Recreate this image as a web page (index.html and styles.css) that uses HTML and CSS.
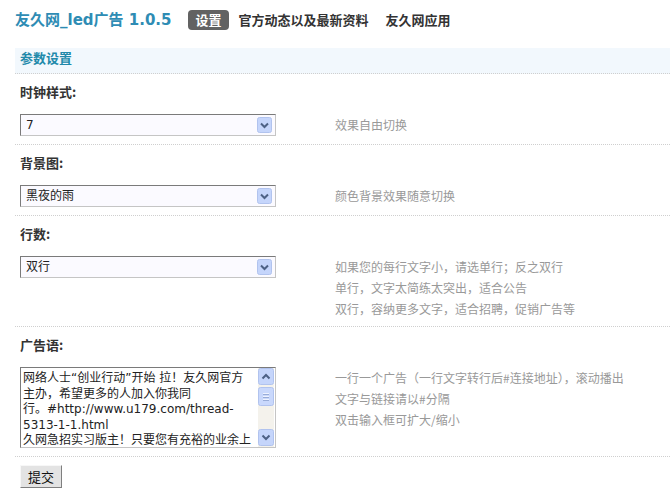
FILE: index.html
```html
<!DOCTYPE html>
<html lang="zh-CN">
<head>
    <meta charset="UTF-8">
    <title>友久网_led广告 - 设置</title>
    <link rel="stylesheet" href="styles.css">
</head>
<body>
    <div class="page">
        <!-- 顶部标题与导航 -->
        <div class="top">
            <h1 class="title">友久网_led广告 1.0.5</h1>
            <ul class="nav">
                <li class="current"><a href="#">设置</a></li>
                <li><a href="#">官方动态以及最新资料</a></li>
                <li><a href="#">友久网应用</a></li>
            </ul>
        </div>

        <form class="settings" onsubmit="return false;">
            <h2 class="bar">参数设置</h2>

            <!-- 时钟样式 -->
            <div class="section">
                <div class="label">时钟样式:</div>
                <div class="row">
                    <div class="select-box">
                        <select name="clock">
                            <option>7</option>
                        </select>
                        <svg class="drop" viewBox="0 0 15 16" width="15" height="16">
                            <rect x="0.5" y="0.5" width="14" height="15" rx="2" fill="#c5d5fb" stroke="#b1c3ee"/>
                            <path d="M4 6.5 L7.5 10 L11 6.5" fill="none" stroke="#4d6185" stroke-width="2"/>
                        </svg>
                    </div>
                    <div class="desc">效果自由切换</div>
                </div>
            </div>

            <!-- 背景图 -->
            <div class="section">
                <div class="label">背景图:</div>
                <div class="row">
                    <div class="select-box">
                        <select name="bg">
                            <option>黑夜的雨</option>
                        </select>
                        <svg class="drop" viewBox="0 0 15 16" width="15" height="16">
                            <rect x="0.5" y="0.5" width="14" height="15" rx="2" fill="#c5d5fb" stroke="#b1c3ee"/>
                            <path d="M4 6.5 L7.5 10 L11 6.5" fill="none" stroke="#4d6185" stroke-width="2"/>
                        </svg>
                    </div>
                    <div class="desc">颜色背景效果随意切换</div>
                </div>
            </div>

            <!-- 行数 -->
            <div class="section">
                <div class="label">行数:</div>
                <div class="row">
                    <div class="select-box">
                        <select name="lines">
                            <option>双行</option>
                        </select>
                        <svg class="drop" viewBox="0 0 15 16" width="15" height="16">
                            <rect x="0.5" y="0.5" width="14" height="15" rx="2" fill="#c5d5fb" stroke="#b1c3ee"/>
                            <path d="M4 6.5 L7.5 10 L11 6.5" fill="none" stroke="#4d6185" stroke-width="2"/>
                        </svg>
                    </div>
                    <div class="desc">
                        如果您的每行文字小，请选单行；反之双行<br>
                        单行，文字太简练太突出，适合公告<br>
                        双行，容纳更多文字，适合招聘，促销广告等
                    </div>
                </div>
            </div>

            <!-- 广告语 -->
            <div class="section">
                <div class="label">广告语:</div>
                <div class="row">
                    <div class="text-box">
                        <textarea name="ads">网络人士“创业行动”开始 拉！友久网官方主办，希望更多的人加入你我同行。&#8288;#http://www.u179.com/thread-&#8203;5313-1-1.html
久网急招实习版主！只要您有充裕的业余上</textarea>
                        <svg class="scroll" viewBox="0 0 16 79" width="16" height="79">
                            <rect x="0" y="0" width="16" height="79" fill="#f4f2ec"/>
                            <rect x="0.5" y="0.5" width="15" height="16" rx="2" fill="#c5d5fb" stroke="#b1c3ee"/>
                            <path d="M4.5 10.5 L8 7 L11.5 10.5" fill="none" stroke="#4d6185" stroke-width="2"/>
                            <rect x="0.5" y="19.5" width="15" height="18" rx="2" fill="#c9d8fc" stroke="#b1c3ee"/>
                            <path d="M5 25.5 H11 M5 28.5 H11 M5 31.5 H11" stroke="#eef3ff" stroke-width="1"/>
                            <path d="M5 26.5 H11 M5 29.5 H11 M5 32.5 H11" stroke="#98acd8" stroke-width="1"/>
                            <rect x="0.5" y="61.5" width="15" height="16" rx="2" fill="#c5d5fb" stroke="#b1c3ee"/>
                            <path d="M4.5 67.5 L8 71 L11.5 67.5" fill="none" stroke="#4d6185" stroke-width="2"/>
                        </svg>
                    </div>
                    <div class="desc">
                        一行一个广告（一行文字转行后#连接地址），滚动播出<br>
                        文字与链接请以#分隔<br>
                        双击输入框可扩大/缩小
                    </div>
                </div>
            </div>

            <div class="actions">
                <button type="submit">提交</button>
            </div>
        </form>
    </div>
</body>
</html>
```

FILE: styles.css
```css
/* Reset básico */
* {
    margin: 0;
    padding: 0;
    box-sizing: border-box;
}

body {
    font-family: "DejaVu Sans", "Noto Sans CJK SC", sans-serif;
    font-size: 12px;
    color: #333;
    background: #fff;
}

.page {
    padding: 10px 0 0 15px;
}

/* Cabeçalho */
.top {
    display: flex;
    align-items: center;
    height: 20px;
}

.title {
    font-size: 15px;
    font-weight: bold;
    line-height: 20px;
    color: #2e8cb4;
    margin-right: 17px;
}

.nav {
    list-style: none;
    display: flex;
    gap: 3px;
}

.nav a {
    display: block;
    padding: 0 7px;
    line-height: 20px;
    font-family: "Noto Sans CJK SC", sans-serif;
    font-size: 13px;
    font-weight: bold;
    color: #333;
    text-decoration: none;
}

.nav .current a {
    background: #626262;
    color: #fff;
    border-radius: 4px;
}

/* Barra de título */
.bar {
    margin-top: 18px;
    padding: 0 5px 5px;
    line-height: 20px;
    font-family: "Noto Sans CJK SC", sans-serif;
    font-size: 13px;
    font-weight: bold;
    color: #2189aa;
    background: #f2f8fd;
    border-bottom: 1px dotted #cfcfcf;
}

.section {
    padding: 11px 0 8px 5px;
    border-bottom: 1px dotted #cfcfcf;
}

.label {
    font-family: "Noto Sans CJK SC", sans-serif;
    font-size: 13px;
    font-weight: bold;
    line-height: 14px;
    color: #333;
    margin-bottom: 15px;
}

.row {
    display: flex;
    align-items: flex-start;
    gap: 59px;
}

.select-box,
.text-box {
    position: relative;
    width: 256px;
    flex-shrink: 0;
}

.select-box select {
    appearance: none;
    -webkit-appearance: none;
    display: block;
    width: 100%;
    height: 22px;
    padding: 0 22px 0 5px;
    border: 1px solid;
    border-color: #7a7a7a #c5c5c5 #c5c5c5 #7a7a7a;
    border-radius: 0;
    background: #fbfaff;
    font-family: "DejaVu Sans", "Noto Sans CJK SC", sans-serif;
    font-size: 12px;
    color: #222;
    outline: none;
}

.drop {
    position: absolute;
    top: 3px;
    right: 4px;
    pointer-events: none;
}

.text-box textarea {
    display: block;
    width: 100%;
    height: 81px;
    padding: 3px 23.5px 2px 2px;
    border: 1px solid;
    border-color: #7a7a7a #c5c5c5 #c5c5c5 #7a7a7a;
    background: #fff;
    font-family: "DejaVu Sans", "Noto Sans CJK SC", sans-serif;
    font-size: 12px;
    line-height: 15.5px;
    color: #222;
    resize: none;
    overflow: hidden;
    outline: none;
}

.scroll {
    position: absolute;
    top: 1px;
    right: 2px;
    pointer-events: none;
}

.desc {
    font-family: "Noto Sans CJK SC", sans-serif;
    font-size: 12px;
    line-height: 21px;
    color: #999;
    white-space: nowrap;
    margin-bottom: -1px;
}

.actions {
    padding: 8px 0 0 5px;
}

.actions button {
    width: 42px;
    height: 23px;
    font-family: "Noto Sans CJK SC", sans-serif;
    font-size: 13px;
    color: #111;
    background: #e3e3e3;
    border: 1px solid;
    border-color: #f7f7f7 #7f7f7f #7f7f7f #f7f7f7;
    cursor: pointer;
}
```
